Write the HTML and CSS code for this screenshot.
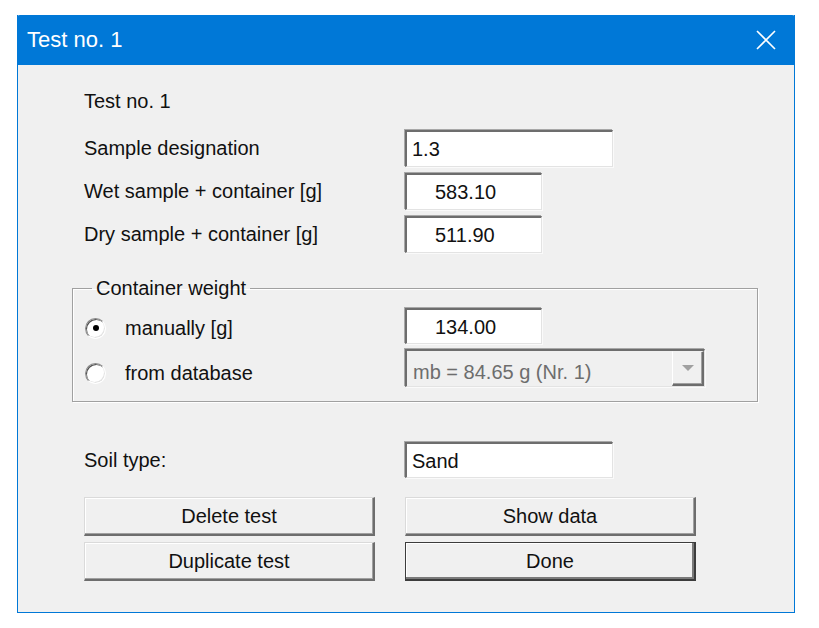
FILE: index.html
```html
<!DOCTYPE html>
<html lang="en">
<head>
  <meta charset="UTF-8" />
  <title>Test no. 1</title>
  <link rel="stylesheet" href="styles.css">
</head>
<body>

  <div class="dialog">
    <div class="titlebar">
      <span class="title">Test no. 1</span>
      <svg class="close" width="20" height="20" viewBox="0 0 20 20">
        <path d="M1 1L19 19M19 1L1 19" stroke="#fff" stroke-width="1.6" fill="none"/>
      </svg>
    </div>

    <div class="client">
      <div class="form-rows">
        <div class="row first"><span class="label">Test no. 1</span></div>
        <div class="row"><span class="label">Sample designation</span><div class="field wide">1.3</div></div>
        <div class="row"><span class="label">Wet sample + container [g]</span><div class="field num">583.10</div></div>
        <div class="row"><span class="label">Dry sample + container [g]</span><div class="field num">511.90</div></div>
      </div>

      <fieldset class="group">
        <legend>Container weight</legend>
        <div class="opt-row">
          <label class="opt"><span class="radio"><span class="dot"></span></span>manually [g]</label>
          <div class="field num short">134.00</div>
        </div>
        <div class="opt-row low">
          <label class="opt"><span class="radio"></span>from database</label>
          <div class="combo">
            <span class="combo-text">mb = 84.65 g (Nr. 1)</span>
            <span class="drop"><span class="arrow"></span></span>
          </div>
        </div>
      </fieldset>

      <div class="row soil"><span class="label">Soil type:</span><div class="field wide short">Sand</div></div>

      <div class="buttons">
        <button class="btn">Delete test</button>
        <button class="btn">Show data</button>
        <button class="btn">Duplicate test</button>
        <button class="btn default">Done</button>
      </div>
    </div>
  </div>

</body>
</html>
```

FILE: styles.css
```css
* {
  box-sizing: border-box;
}

body {
  margin: 0;
  background: #fff;
  font-family: "Liberation Sans", Arial, sans-serif;
  font-size: 20px;
  color: #111;
}

.dialog {
  margin: 15px 0 0 17px;
  width: 778px;
  height: 598px;
  border: 1px solid #0078d7;
  border-top: none;
  display: flex;
  flex-direction: column;
  background: #f0f0f0;
}

.titlebar {
  height: 50px;
  background: #0078d7;
  display: flex;
  align-items: center;
  justify-content: space-between;
  padding: 0 19px 0 9px;
  border-radius: 3px 3px 0 0;
  margin: 0 -1px;
}

.title {
  color: #fff;
  font-size: 22px;
  margin-left: 1px;
}

.close {
  display: block;
}

.client {
  flex: 1;
  padding: 18px 0 0 66px;
}

/* rows: label on the left, control at x=405 */
.form-rows {
  display: flex;
  flex-direction: column;
  gap: 6px;
}

.row {
  display: flex;
  align-items: center;
  height: 37px;
}

.row.first {
  margin-bottom: 4px;
}

.label {
  width: 321px;
}

.field {
  height: 37px;
  background: #fff;
  border-style: solid;
  border-width: 2px 1px 1px 2px;
  border-color: #6d6d6d #e3e3e3 #e3e3e3 #6d6d6d;
  box-shadow: -1px -1px 0 #a8a8a8, 1px 1px 0 #fafafa;
  display: flex;
  align-items: center;
  padding: 1px 0 0 5px;
  color: #111;
}

.field.short {
  height: 36px;
}

.field.wide {
  width: 208px;
}

.field.num {
  width: 137px;
  padding-left: 28px;
}

/* group box */
.group {
  margin: 24px 0 0 -12px;
  padding: 8px 0 14px 0;
  width: 686px;
  min-width: 0;
  border: 1px solid #a0a0a0;
  box-shadow: 1px 1px 0 #fff, inset 1px 1px 0 #fff;
}

.group legend {
  margin-left: 19px;
  padding: 0 4px;
}

.opt-row {
  display: flex;
  align-items: center;
  height: 36px;
}

.opt-row.low {
  height: 38px;
  margin-top: 5px;
}

.opt {
  width: 332px;
  display: flex;
  align-items: center;
  padding: 4px 0 0 12px;
}

.low .opt {
  padding-top: 11px;
}

.radio {
  width: 21px;
  height: 21px;
  border-radius: 50%;
  border: 1px solid;
  border-color: #8a8a8a #fff #fff #8a8a8a;
  box-shadow: inset 1px 1px 0 #505050, inset -1px -1px 0 #e3e3e3;
  background: #fff;
  margin-right: 19px;
  display: flex;
  align-items: center;
  justify-content: center;
}

.dot {
  width: 6px;
  height: 6px;
  border-radius: 50%;
  background: #000;
}

.combo {
  width: 300px;
  height: 38px;
  display: flex;
  border-style: solid;
  border-width: 2px 1px 1px 2px;
  border-color: #6d6d6d #e3e3e3 #e3e3e3 #6d6d6d;
  box-shadow: -1px -1px 0 #a8a8a8, 1px 1px 0 #fafafa;
  background: #f0f0f0;
}

.combo-text {
  flex: 1;
  display: flex;
  align-items: center;
  padding: 7px 0 0 6px;
  color: #6d6d6d;
}

.drop {
  width: 32px;
  border-style: solid;
  border-width: 1px 2px 2px 1px;
  border-color: #f0f0f0 #6d6d6d #6d6d6d #fff;
  box-shadow: inset -1px -1px 0 #a0a0a0;
  display: flex;
  align-items: center;
  justify-content: center;
}

.arrow {
  width: 0;
  height: 0;
  border-left: 6px solid transparent;
  border-right: 6px solid transparent;
  border-top: 6px solid #a0a0a0;
}

.row.soil {
  margin-top: 40px;
  height: 36px;
}

/* push buttons */
.buttons {
  margin-top: 19px;
  display: grid;
  grid-template-columns: 291px 291px;
  grid-auto-rows: 39px;
  column-gap: 30px;
  row-gap: 6px;
}

.btn {
  font-family: inherit;
  font-size: 20px;
  color: #111;
  background: #f0f0f0;
  border-style: solid;
  border-width: 1px 2px 2px 1px;
  border-color: #dadada #6d6d6d #6d6d6d #dadada;
  box-shadow: inset -1px -1px 0 #a0a0a0, inset 1px 1px 0 #fff;
  padding: 0;
}

.btn.default {
  border-width: 1px 2px 2px 1px;
  border-color: #3c3c3c;
  box-shadow: inset -2px -2px 0 #7a7a7a, inset 1px 1px 0 #fff;
}
```
